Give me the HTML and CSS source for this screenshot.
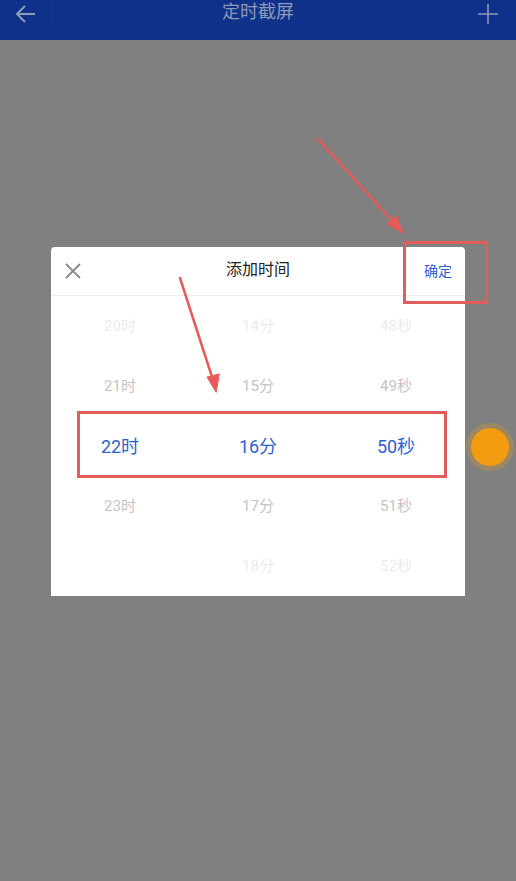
FILE: index.html
```html
<!DOCTYPE html>
<html lang="zh-CN">
<head>
  <meta charset="UTF-8" />
  <meta name="viewport" content="width=device-width, initial-scale=1.0"/>
  <title>定时截屏</title>
  <link rel="stylesheet" href="styles.css">
</head>
<body>

  <div class="app-bar">
    <span class="app-back">
      <svg width="22" height="22" viewBox="0 0 22 22"><path d="M20 11H3M10 3l-8 8 8 8" fill="none" stroke="#8e9ab8" stroke-width="2"/></svg>
    </span>
    <span class="app-sep"></span>
    <div class="app-title">定时截屏</div>
    <span class="app-add">
      <svg width="20" height="20" viewBox="0 0 20 20"><path d="M10 0v20M0 10h20" fill="none" stroke="#8e9ab8" stroke-width="1.6"/></svg>
    </span>
  </div>

  <div class="dialog">
    <div class="dialog-head">
      <span class="dialog-close">
        <svg width="16" height="16" viewBox="0 0 16 16"><path d="M1 1l14 14M15 1L1 15" stroke="#8a8a8a" stroke-width="1.8"/></svg>
      </span>
      <div class="dialog-title">添加时间</div>
      <span class="dialog-ok">确定</span>
    </div>

    <div class="wheel">
      <div class="cell far">20时</div>
      <div class="cell far">14分</div>
      <div class="cell far">48秒</div>

      <div class="cell near">21时</div>
      <div class="cell near">15分</div>
      <div class="cell near">49秒</div>

      <div class="cell current">22时</div>
      <div class="cell current">16分</div>
      <div class="cell current">50秒</div>

      <div class="cell near">23时</div>
      <div class="cell near">17分</div>
      <div class="cell near">51秒</div>

      <div class="cell far"></div>
      <div class="cell far">18分</div>
      <div class="cell far">52秒</div>
    </div>

    <div class="mark mark-row"></div>
    <div class="mark mark-ok"></div>
  </div>

  <div class="float-dot"></div>

  <svg class="arrows" width="516" height="881" viewBox="0 0 516 881">
    <g stroke="#e85a5a" stroke-width="2.5" fill="#e85a5a" stroke-linecap="round">
      <line x1="318" y1="139" x2="396" y2="225"/>
      <polygon points="403,233 387,224 396,216" stroke-width="1"/>
      <line x1="180" y1="278" x2="213" y2="380"/>
      <polygon points="216,392 207,377 219,374" stroke-width="1"/>
    </g>
  </svg>

</body>
</html>
```

FILE: styles.css
```css
body {
  font-family: Roboto, "Noto Sans CJK SC", sans-serif;
  background: #808080;
  margin: 0;
  padding: 0;
  width: 516px;
  height: 881px;
  position: relative;
  overflow: hidden;
}

.app-bar {
  height: 40px;
  background: #10318a;
  display: flex;
  align-items: flex-start;
  position: relative;
}

.app-back {
  padding: 3px 0 0 15px;
  width: 37px;
}

.app-sep {
  width: 1px;
  height: 24px;
  background: #1a3b93;
}

.app-title {
  position: absolute;
  left: 0;
  right: 0;
  top: -2px;
  text-align: center;
  color: #8e9ab8;
  font-size: 18px;
  line-height: 28px;
}

.app-add {
  margin-left: auto;
  padding: 4px 18px 0 0;
}

.dialog {
  width: 414px;
  margin: 207px auto 0;
  background: #fff;
  border-radius: 4px 4px 0 0;
  position: relative;
}

.dialog-head {
  height: 48px;
  border-bottom: 1px solid #eeeeee;
  display: flex;
  align-items: center;
  position: relative;
}

.dialog-close {
  padding: 4px 0 0 14px;
}

.dialog-title {
  position: absolute;
  left: 0;
  right: 0;
  top: 12px;
  text-align: center;
  font-size: 16px;
  line-height: 22px;
  color: #222;
}

.dialog-ok {
  margin-left: auto;
  margin-right: 13px;
  font-size: 14px;
  color: #2f5fcf;
  position: relative;
  top: -1px;
}

.wheel {
  display: grid;
  grid-template-columns: repeat(3, 1fr);
  grid-auto-rows: 60px;
}

.cell {
  display: flex;
  align-items: center;
  justify-content: center;
  font-size: 15px;
  padding-bottom: 3px;
}

.cell.far {
  color: #ebebeb;
}

.cell.near {
  color: #c4c4c4;
}

.cell.current {
  color: #2f5fcf;
  font-size: 18px;
}

.mark {
  position: absolute;
  border: 3px solid #e25c5c;
  box-sizing: border-box;
}

.mark-row {
  left: 26px;
  top: 164px;
  width: 370px;
  height: 67px;
}

.mark-ok {
  left: 352px;
  top: -6px;
  width: 85px;
  height: 63px;
}

.float-dot {
  position: absolute;
  left: 471px;
  top: 428px;
  width: 38px;
  height: 38px;
  border-radius: 50%;
  background: #f39c0f;
  box-shadow: 0 0 0 5px rgba(243, 156, 15, 0.25);
}

.arrows {
  position: absolute;
  left: 0;
  top: 0;
  pointer-events: none;
}
```
